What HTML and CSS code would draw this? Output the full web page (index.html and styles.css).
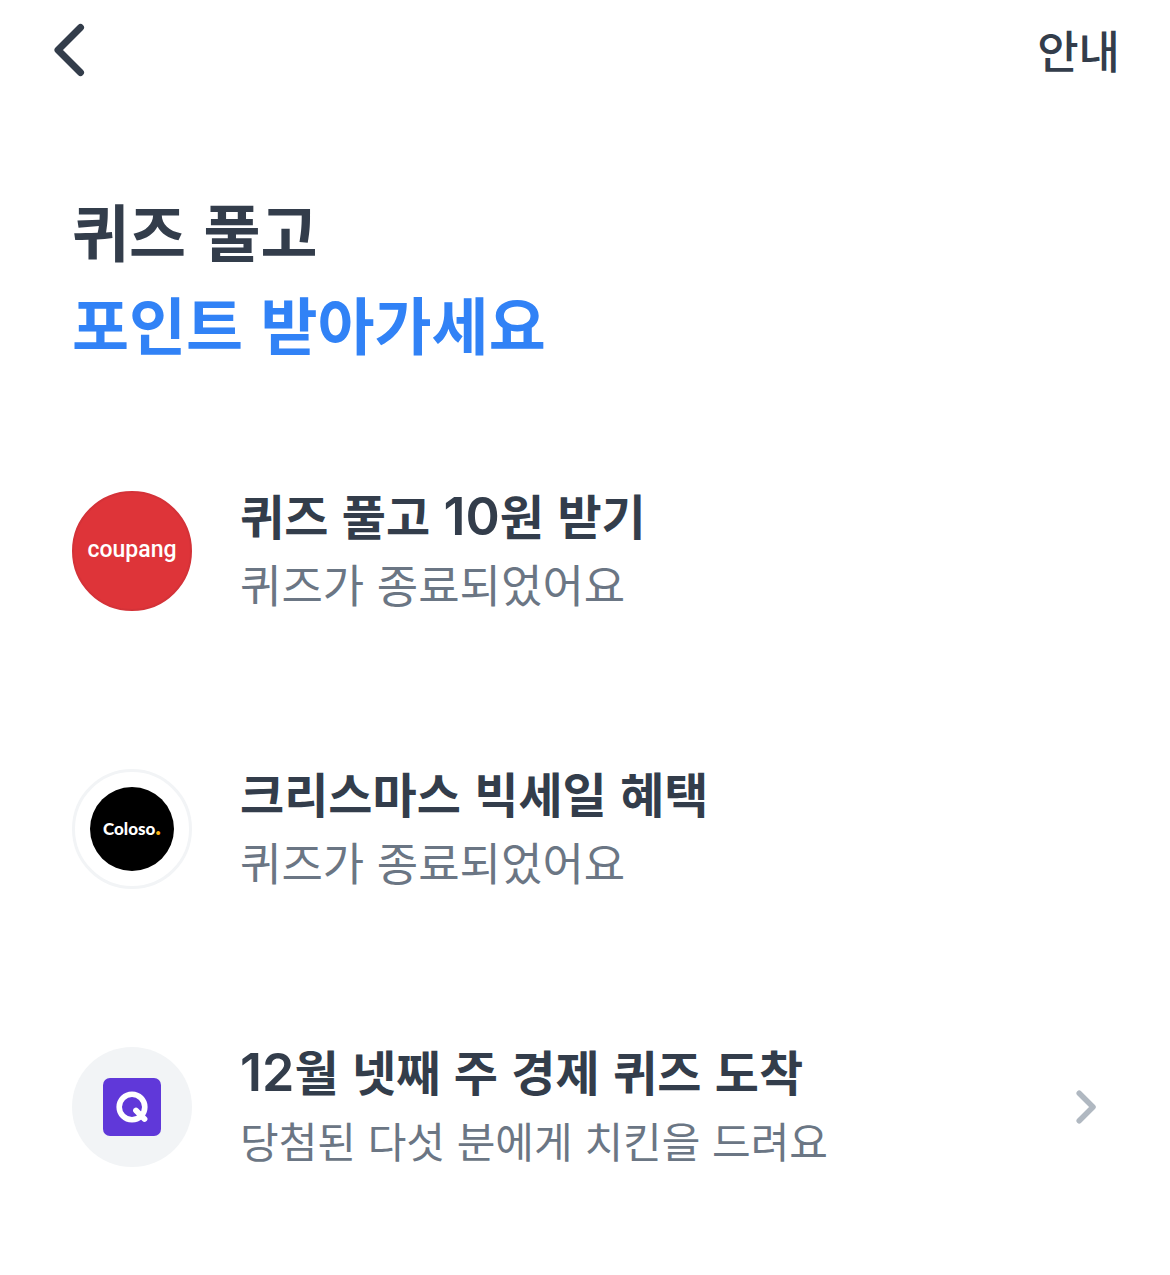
FILE: index.html
```html
<!DOCTYPE html>
<html lang="ko">
<head>
    <meta charset="UTF-8">
    <meta name="viewport" content="width=device-width, initial-scale=1.0">
    <title>퀴즈 풀고 포인트 받아가세요</title>
    <link rel="stylesheet" href="styles.css">
</head>
<body>

<header class="topbar">
    <button type="button" class="back" aria-label="뒤로">
        <svg width="32" height="54" viewBox="0 0 32 54" fill="none" stroke="currentColor" stroke-width="7" stroke-linecap="round" stroke-linejoin="round">
            <path d="M27.5 4.5L5 27l22.500 22.500"/>
        </svg>
    </button>
    <a href="#" class="guide">안내</a>
</header>

<main class="content">
    <h1 class="title">퀴즈 풀고<br><span class="accent">포인트 받아가세요</span></h1>

    <ul class="quiz-list">
        <li>
            <a href="#" class="quiz">
                <span class="logo coupang">coupang</span>
                <span class="text">
                    <strong class="name">퀴즈 풀고 <span class="num">10</span>원 받기</strong>
                    <span class="desc">퀴즈가 종료되었어요</span>
                </span>
            </a>
        </li>
        <li>
            <a href="#" class="quiz">
                <span class="logo coloso"><span class="disc">Coloso<span class="dot">.</span></span></span>
                <span class="text">
                    <strong class="name">크리스마스 빅세일 혜택</strong>
                    <span class="desc">퀴즈가 종료되었어요</span>
                </span>
            </a>
        </li>
        <li>
            <a href="#" class="quiz">
                <span class="logo economy">
                    <svg width="58" height="58" viewBox="0 0 58 58" fill="none">
                        <rect width="58" height="58" rx="7" fill="#6038d9"/>
                        <circle cx="29" cy="29" r="12.800" stroke="#fff" stroke-width="5.600"/>
                        <path d="M33 32.500l8.500 8.500" stroke="#fff" stroke-width="5.800" stroke-linecap="round"/>
                    </svg>
                </span>
                <span class="text">
                    <strong class="name"><span class="num">12</span>월 넷째 주 경제 퀴즈 도착</strong>
                    <span class="desc small">당첨된 다섯 분에게 치킨을 드려요</span>
                </span>
                <svg class="arrow" width="22" height="34" viewBox="0 0 22 34" fill="none" stroke="currentColor" stroke-width="5.500" stroke-linecap="round" stroke-linejoin="round">
                    <path d="M3.200 3.200L17 17 3.200 30.800"/>
                </svg>
            </a>
        </li>
    </ul>
</main>

</body>
</html>
```
FILE: styles.css
```css
body {
    margin: 0;
    font-family: "Noto Sans CJK KR", sans-serif;
    background-color: #fff;
    color: #333d4b;
}
a {
    color: inherit;
    text-decoration: none;
}
.topbar {
    display: flex;
    justify-content: space-between;
    align-items: center;
    height: 100px;
    padding: 0 50px 0 53px;
}
.back {
    display: flex;
    padding: 0;
    border: none;
    background: none;
    color: inherit;
    cursor: pointer;
}
.guide {
    font-size: 45px;
    font-weight: 500;
    line-height: 60px;
}
.content {
    padding: 84px 72px 0;
}
.title {
    margin: 0;
    font-size: 62px;
    font-weight: 700;
    line-height: 93px;
}
.accent {
    color: #3182f6;
}
.quiz-list {
    display: flex;
    flex-direction: column;
    gap: 136px;
    margin: 0;
    padding: 110px 0 72px;
    list-style: none;
}
.quiz {
    display: flex;
    align-items: center;
    gap: 48px;
}
.logo {
    display: flex;
    flex-shrink: 0;
    justify-content: center;
    align-items: center;
    width: 120px;
    height: 120px;
    box-sizing: border-box;
    border-radius: 50%;
}
.coupang {
    padding-bottom: 4px;
    border: 2px solid #d43238;
    background-color: #de3439;
    color: #fff;
    font-family: Roboto, sans-serif;
    font-size: 23px;
    font-weight: 500;
}
.coloso {
    border: 3px solid #f2f4f6;
}
.disc {
    width: 84px;
    border-radius: 50%;
    background-color: #000;
    color: #fff;
    font-family: Lato, sans-serif;
    font-size: 17px;
    font-weight: 900;
    line-height: 84px;
    text-align: center;
}
.dot {
    color: #fdb515;
    font-size: 24px;
    line-height: 1;
}
.economy {
    background-color: #f2f4f6;
}
.text {
    display: flex;
    flex: 1;
    flex-direction: column;
    padding-bottom: 2px;
}
.name {
    font-size: 48px;
    font-weight: 700;
    line-height: 68px;
}
.num {
    font-family: Inter, sans-serif;
    font-size: 52px;
    font-weight: 600;
    line-height: 1;
}
.desc {
    color: #6b7684;
    font-size: 45px;
    line-height: 72px;
}
.small {
    font-size: 42px;
}
.arrow {
    flex-shrink: 0;
    color: #b0b8c1;
}
```
